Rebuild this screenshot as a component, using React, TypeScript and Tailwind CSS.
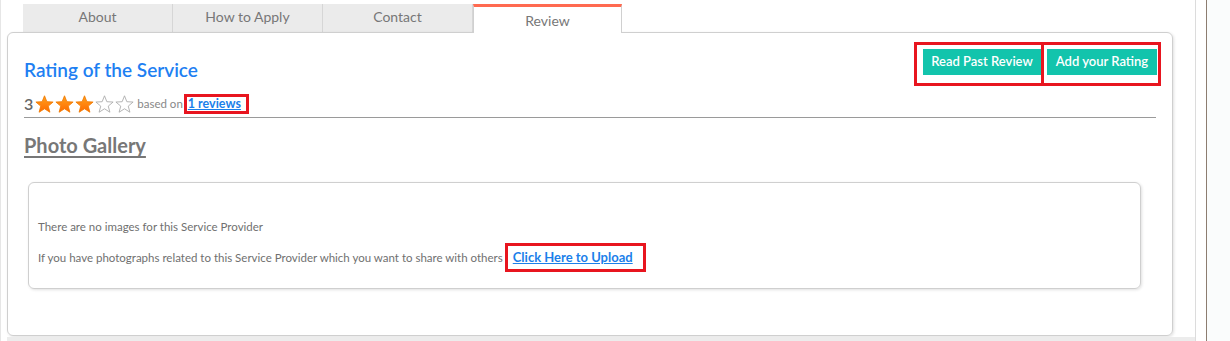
import React from "react"

const tabs = ["About", "How to Apply", "Contact"]

function Star({ filled }: { filled: boolean }) {
  return (
    <svg width="19" height="18" viewBox="0 0 24 23" className="shrink-0">
      <defs>
        <linearGradient id="starFill" x1="0" y1="0" x2="0" y2="1">
          <stop offset="0%" stopColor="#ffa21f" />
          <stop offset="100%" stopColor="#ff6a00" />
        </linearGradient>
      </defs>
      <polygon
        points="12,1 15,8.6 23,9 16.8,14.2 18.9,22 12,17.6 5.1,22 7.2,14.2 1,9 9,8.6"
        fill={filled ? "url(#starFill)" : "#fff"}
        stroke={filled ? "#f07a00" : "#a9a9a9"}
        strokeWidth="1.1"
        strokeLinejoin="round"
      />
    </svg>
  )
}

export default function App() {
  return (
    <div className="flex h-[341px] w-[1230px] overflow-hidden bg-white font-['Lato',sans-serif]">
      {/* Main column */}
      <div className="flex w-[1195px] shrink-0 flex-col border-l border-[#e6e6e6] pl-[6px] pt-[4px]">
        {/* Tabs */}
        <div className="ml-[16px] flex h-[28px]">
          {tabs.map((t) => (
            <div
              key={t}
              className="flex w-[150px] items-center justify-center border-r border-[#d6d6d6] bg-[#ebebeb] pb-[3px] text-[14px] text-[#777]"
            >
              {t}
            </div>
          ))}
          <div className="relative z-10 -mb-px flex h-[29px] w-[149px] items-center justify-center border-x border-t-[3px] border-x-[#d0d0d0] border-t-[#ff6a50] bg-white pt-px text-[14px] text-[#777]">
            Review
          </div>
        </div>

        {/* Card */}
        <div className="flex h-[305px] w-[1166px] flex-col rounded-[6px] border border-[#cfcfcf] shadow-[1px_1px_3px_rgba(0,0,0,0.12)]">
          <div className="flex items-start justify-between pr-[11px] pt-[9px]">
            <div className="pl-[16px] pt-[16px]">
              <h2 className="text-[19px] leading-[24px] font-semibold text-[#1e7ff2]">Rating of the Service</h2>
              <div className="mt-[12px] flex items-center">
                <span className="mr-[2px] text-[16px] leading-[20px] font-semibold text-[#666]">3</span>
                <div className="flex items-center gap-[1px]">
                  <Star filled />
                  <Star filled />
                  <Star filled />
                  <Star filled={false} />
                  <Star filled={false} />
                </div>
                <span className="ml-[3px] text-[11.5px] text-[#888]">based on</span>
                <span className="ml-px border-[3px] border-[#e8151f] pl-[1px] pr-[5px] text-[12.5px] leading-[14px] font-bold text-[#1b7fea] underline">
                  1 reviews
                </span>
              </div>
            </div>
            <div className="flex">
              <div className="border-[3px] border-[#e8151f] pb-[8px] pl-[6px] pt-[3px]">
                <button className="h-[26px] w-[118px] bg-[#12c4ac] text-[13px] font-semibold text-white">
                  Read Past Review
                </button>
              </div>
              <div className="border-[3px] border-l-0 border-[#e8151f] pb-[8px] pl-[3px] pr-[1px] pt-[3px]">
                <button className="h-[26px] w-[110px] bg-[#12c4ac] text-[13px] font-semibold text-white">
                  Add your Rating
                </button>
              </div>
            </div>
          </div>

          <hr className="mx-[16px] mt-[3px] border-t border-[#9a9a9a]" />

          <h3 className="ml-[16px] mt-[16px] text-[20px] leading-[22px] font-bold text-[#777] underline underline-offset-[3px]">
            Photo Gallery
          </h3>

          {/* Gallery box */}
          <div className="ml-[20px] mt-[26px] flex h-[107px] w-[1113px] flex-col rounded-[6px] border border-[#cfcfcf] pl-[9px] pt-[36px] shadow-[1px_1px_3px_rgba(0,0,0,0.12)]">
            <p className="text-[11.5px] leading-[16px] text-[#707070]">There are no images for this Service Provider</p>
            <div className="mt-[8px] flex items-center text-[11.5px] text-[#707070]">
              <span>If you have photographs related to this Service Provider which you want to share with others</span>
              <span className="ml-[2px] border-[3px] border-[#e8151f] py-[4px] pl-[5px] pr-[10px] text-[13px] leading-[15px] font-bold text-[#1b7fea] underline">
                Click Here to Upload
              </span>
            </div>
          </div>
        </div>
        <div className="mt-px h-[4px] w-[1188px] bg-[#ececec]" />
      </div>

      {/* Right edge */}
      <div className="h-full w-px bg-[#dcdcdc]" />
      <div className="ml-[10px] h-full w-px bg-[#8c7d70]" />
      <div className="h-full flex-1 bg-[#fafcfc]" />
    </div>
  )
}
